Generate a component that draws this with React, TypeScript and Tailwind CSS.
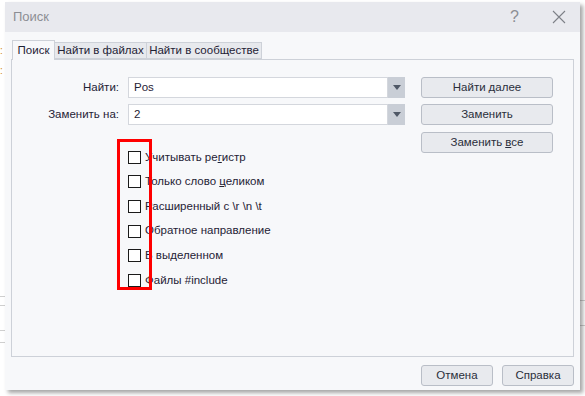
import React from 'react'

const font = { fontFamily: '"Liberation Sans", Arial, sans-serif' }

function Combo({ value }: { value: string }) {
  return (
    <div className="flex h-[21px] w-[277px]">
      <div className="flex flex-1 items-center border border-[#d4d7dd] bg-white pl-[5px] text-[11.5px] text-[#1f2235]">
        {value}
      </div>
      <div className="flex w-[17px] items-center justify-center bg-[#c9ced6]">
        <svg width="8" height="5" viewBox="0 0 8 5">
          <path d="M0 0h8L4 5z" fill="#4f5866" />
        </svg>
      </div>
    </div>
  )
}

function Btn({ children, className = '' }: { children: React.ReactNode; className?: string }) {
  return (
    <div
      className={`flex h-[21px] items-center justify-center whitespace-nowrap rounded-[3px] border border-[#b9bec7] bg-[#e8eaee] text-[11.5px] text-[#2a2e3a] ${className}`}
    >
      {children}
    </div>
  )
}

function Check({ children }: { children: React.ReactNode }) {
  return (
    <div className="flex h-[24.6px] items-center gap-[4px]">
      <div className="h-[13px] w-[13px] border border-[#1a1a1a] bg-white" />
      <span className="whitespace-nowrap text-[11.5px] text-[#1f2235]">{children}</span>
    </div>
  )
}

export default function App() {
  return (
    <div className="relative h-[396px] w-[585px] overflow-hidden bg-white" style={font}>
      {/* desktop behind the dialog */}
      <div className="absolute left-[300px] top-0 h-[3px] w-[210px] border-b border-dotted border-[#e000e0]" />
      <div className="absolute left-[0px] top-[43px] text-[10px] text-[#d08a20]">:</div>
      <div className="absolute left-[0px] top-[63px] text-[10px] text-[#d08a20]">:</div>
      <div className="absolute left-0 top-[296px] h-px w-[6px] bg-[#cfcfcf]" />
      <div className="absolute left-0 top-[305px] h-px w-[6px] bg-[#cfcfcf]" />
      <div className="absolute left-0 top-[330px] h-px w-[6px] bg-[#cfcfcf]" />
      <div className="absolute left-0 top-[342px] h-px w-[6px] bg-[#cfcfcf]" />
      <div className="absolute right-0 top-[300px] h-px w-[6px] bg-[#cfcfcf]" />
      <div className="absolute right-0 top-[325px] h-px w-[6px] bg-[#cfcfcf]" />

      <div className="relative ml-[5px] mt-[2px] flex h-[388px] w-[575px] flex-col bg-[#f7f8fa] shadow-[3px_3px_4px_rgba(0,0,0,0.35)]">
        {/* title bar */}
        <div className="flex h-[30px] items-center bg-[#e8e9ee] pl-[8px] pr-[14px]">
          <span className="text-[13px] text-[#8c8e94]">Поиск</span>
          <span className="ml-auto text-[16px] font-light text-[#8c8e94]">?</span>
          <svg className="ml-[33px]" width="14" height="14" viewBox="0 0 14 14">
            <path d="M1 1l12 12M13 1L1 13" stroke="#7d8087" strokeWidth="1.1" />
          </svg>
        </div>

        <div className="flex flex-1 flex-col px-[6px] pt-[8px]">
          {/* tabs */}
          <div className="flex h-[19px] items-end pl-[1px]">
            <div className="relative z-10 mb-[-1px] flex h-[20px] w-[43px] items-center justify-center whitespace-nowrap border border-b-0 border-[#cdd1d8] bg-[#f7f8fa] text-[11.5px] text-[#1f2235]">
              Поиск
            </div>
            <div className="flex h-[17px] w-[92px] items-center justify-center whitespace-nowrap border border-l-0 border-[#cdd1d8] bg-[#e7e9ed] text-[11.5px] text-[#1f2235]">
              Найти в файлах
            </div>
            <div className="flex h-[17px] w-[115px] items-center justify-center whitespace-nowrap border border-l-0 border-[#cdd1d8] bg-[#e7e9ed] text-[11.5px] text-[#1f2235]">
              Найти в сообществе
            </div>
          </div>

          {/* panel */}
          <div className="flex h-[298px] border border-[#cdd1d8] pt-[17px]">
            <div className="flex flex-col">
              <div className="flex items-center">
                <span className="w-[108px] pr-[1px] text-right text-[11.5px] text-[#1f2235]">Найти:</span>
                <div className="ml-[8px]">
                  <Combo value="Pos" />
                </div>
              </div>
              <div className="mt-[6px] flex items-center">
                <span className="w-[108px] pr-[1px] text-right text-[11.5px] text-[#1f2235]">Заменить на:</span>
                <div className="ml-[8px]">
                  <Combo value="2" />
                </div>
              </div>

              <div className="relative ml-[116px] mt-[20px] flex flex-col">
                <Check>
                  Учитывать ре<u>г</u>истр
                </Check>
                <Check>
                  Только слово <u>ц</u>еликом
                </Check>
                <Check>Расширенный с \r \n \t</Check>
                <Check>Обратное направление</Check>
                <Check>В выделенном</Check>
                <Check>Файлы #include</Check>
                <div className="absolute left-[-11px] top-[-6px] h-[151px] w-[35px] border-[3px] border-[#ff0000]" />
              </div>
            </div>

            <div className="ml-[16px] flex w-[132px] flex-col">
              <Btn>
                Найти <u className="ml-[3px]">д</u>алее
              </Btn>
              <Btn className="mt-[6px]">Заменить</Btn>
              <Btn className="mt-[7px]">
                Заменить <u className="ml-[3px]">в</u>се
              </Btn>
            </div>
          </div>

          {/* bottom buttons */}
          <div className="mt-[8px] flex justify-end gap-[9px]">
            <Btn className="w-[72px]">Отмена</Btn>
            <Btn className="w-[72px]">Справка</Btn>
          </div>
        </div>
      </div>
    </div>
  )
}
